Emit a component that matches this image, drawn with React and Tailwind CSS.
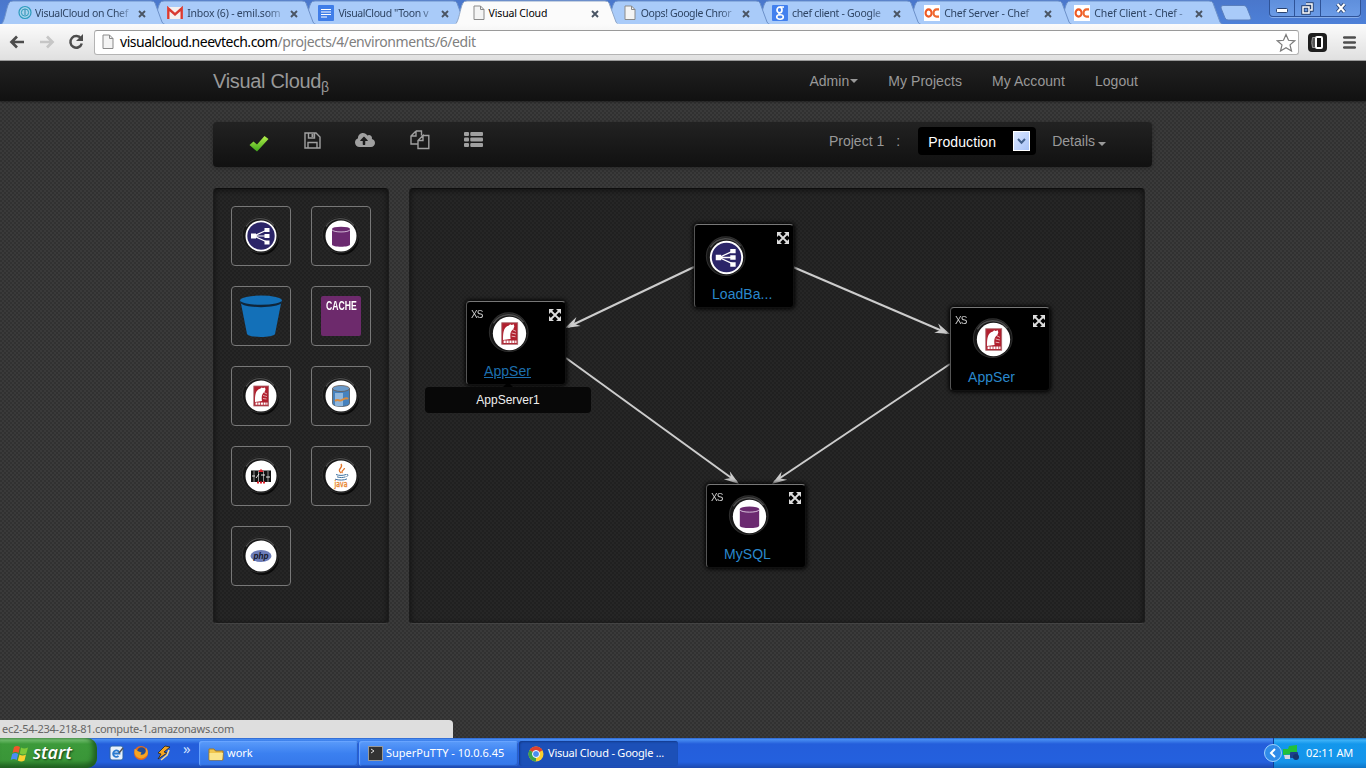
import React from 'react';
import { FaCloudUploadAlt } from 'react-icons/fa';

const TEX = "bg-[conic-gradient(#3a3a3a_25%,#313131_0_50%,#3a3a3a_0_75%,#313131_0)] bg-[length:4px_4px]";

/* ---------- browser chrome icons ---------- */
const PageIcon = ({ className = 'w-3 h-4' }) => (
  <svg viewBox="0 0 12 16" className={className}>
    <path d="M1 1h6.5L11 4.5V14.5H1z" fill="#f4f4f4" stroke="#8a8a8a" />
    <path d="M7.5 1v3.5H11" fill="none" stroke="#8a8a8a" />
  </svg>
);
const VcIcon = () => (
  <svg viewBox="0 0 16 16" className="w-4 h-4">
    <circle cx="8" cy="7.5" r="6" fill="#a9d3ec" stroke="#2d9bbd" strokeWidth="1.2" />
    <circle cx="8" cy="7.5" r="3.6" fill="none" stroke="#2d9bbd" />
    <path d="M8 4v6" stroke="#2d8ab0" />
  </svg>
);
const GmailIcon = () => (
  <svg viewBox="0 0 16 16" className="w-4 h-4">
    <path d="M0 2h16v12H0z" fill="#f5f0f0" />
    <path d="M1.3 14V3.5L8 9.5l6.700-6V14" fill="none" stroke="#d93a32" strokeWidth="2.4" />
  </svg>
);
const DocsIcon = () => (
  <svg viewBox="0 0 16 16" className="w-4 h-4">
    <rect width="16" height="16" rx="1" fill="#3f7de8" />
    <path d="M3 4.500h10M3 7h10M3 9.500h10M3 12h6" stroke="#fff" strokeWidth="1.2" />
  </svg>
);
const GoogleIcon = () => (
  <svg viewBox="0 0 16 16" className="w-4 h-4">
    <rect width="16" height="16" rx="1" fill="#4380ee" />
    <ellipse cx="7.500" cy="5" rx="2.500" ry="2.800" fill="none" stroke="#fff" strokeWidth="1.700" />
    <path d="M8 2h4M7.500 7.800q-1.500 1.200.500 2" fill="none" stroke="#fff" strokeWidth="1.300" />
    <ellipse cx="8" cy="12" rx="3.300" ry="2.200" fill="none" stroke="#fff" strokeWidth="1.600" />
  </svg>
);
const ChefIcon = () => (
  <svg viewBox="0 0 16 16" className="w-4 h-4">
    <rect width="16" height="16" fill="#fff" />
    <ellipse cx="4.600" cy="8" rx="3" ry="3.600" fill="none" stroke="#ee5a24" strokeWidth="2.100" />
    <path d="M15 4.400H12.500a3 3.600 0 0 0 0 7.200H15" fill="none" stroke="#f06a30" strokeWidth="2.100" />
  </svg>
);

const TABS = [
  { icon: <VcIcon />, text: 'VisualCloud on Chef', z: 'z-[8]', pad: 'pl-[16px]', gap: 'w-[18px]', tw: 'w-[98px]', tr: 'tracking-[-.3px]' },
  { icon: <GmailIcon />, text: 'Inbox (6) - emil.som', z: 'z-[7]', pad: 'pl-[15px]', gap: 'w-[20px]', tw: 'w-[98px]', tr: 'tracking-[-.2px]' },
  { icon: <DocsIcon />, text: 'VisualCloud "Toon v', z: 'z-[6]', pad: 'pl-[15px]', gap: 'w-[20px]', tw: 'w-[98px]', tr: 'tracking-[-.4px]' },
  { icon: <PageIcon />, text: 'Visual Cloud', z: 'z-[9]', pad: 'pl-[18px]', gap: 'w-[16px]', tw: 'w-[97px]', tr: 'tracking-[-.15px]', active: true },
  { icon: <PageIcon />, text: 'Oops! Google Chror', z: 'z-[5]', pad: 'pl-[18px]', gap: 'w-[17px]', tw: 'w-[96px]', tr: 'tracking-[-.4px]' },
  { icon: <GoogleIcon />, text: 'chef client - Google', z: 'z-[4]', pad: 'pl-[15px]', gap: 'w-[20px]', tw: 'w-[96px]', tr: 'tracking-[-.3px]' },
  { icon: <ChefIcon />, text: 'Chef Server - Chef', z: 'z-[3]', pad: 'pl-[16px]', gap: 'w-[20px]', tw: 'w-[95px]', tr: 'tracking-[-.2px]' },
  { icon: <ChefIcon />, text: 'Chef Client - Chef -', z: 'z-[2]', pad: 'pl-[15px]', gap: 'w-[20px]', tw: 'w-[96px]', tr: 'tracking-[-.15px]' },
];

function Tab({ icon, text, z, pad, gap, tw, tr, active }) {
  return (
    <div className={`relative ${z} ${pad} w-[151.2px] shrink-0 h-6 flex items-center`}>
      <svg viewBox="0 0 164 24" className="absolute left-0 top-0 w-[164px] h-6" preserveAspectRatio="none">
        <path d="M0 24.500C4 22 5 8 8 3Q9 1 12 1H150Q153 1 154 3L161 22Q162 24 164 24.500Z" fill={active ? '#fbfbfb' : '#a9cbf9'} stroke={active ? '#8ea6c8' : '#6d91c9'} />
        {active && <path d="M0 24.500H164" stroke="#fbfbfb" strokeWidth="1.500" />}
      </svg>
      <div className={`relative ${gap} shrink-0 flex mt-[2px]`}>{icon}</div>
      <div className={`relative ${tw} ${tr} shrink-0 whitespace-nowrap text-[10.5px] leading-4 mt-[2px] ${active ? 'text-black' : 'text-[#2e4463] [mask-image:linear-gradient(90deg,#000_82%,transparent_102%)]'}`}>{text}</div>
      <svg viewBox="0 0 8 8" className="relative shrink-0 ml-[5px] w-2 h-2 mt-[3px]"><path d="M1 1l6 6M7 1L1 7" stroke="#4a5564" strokeWidth="1.900" /></svg>
    </div>
  );
}

function WindowButtons() {
  return (
    <div className="ml-auto mr-[5px] h-[17px] w-[92px] flex rounded-b-[4px] border border-t-0 border-[#2f5397] bg-gradient-to-b from-[#5f8fdc] to-[#6b9be6] shadow-[0_1px_0_#86adea]">
      <div className="w-[25px] border-r border-[#2f5397] flex items-center justify-center">
        <svg viewBox="0 0 12 5" className="w-3 h-[5px] mt-[4px]"><rect x=".5" y=".5" width="11" height="4" rx="1" fill="#fff" stroke="#29426f" /></svg>
      </div>
      <div className="w-[26px] border-r border-[#2f5397] flex items-center justify-center">
        <svg viewBox="0 0 13 13" className="w-[13px] h-[13px]">
          <path d="M5 2h6v6H9M2 5h6v6H2z" fill="none" stroke="#29426f" strokeWidth="3.400" />
          <path d="M5 2h6v6H9M2 5h6v6H2z" fill="none" stroke="#fff" strokeWidth="1.500" />
        </svg>
      </div>
      <div className="flex-1 flex items-center justify-center">
        <svg viewBox="0 0 12 12" className="w-3 h-3"><path d="M2.500 2l7 8M9.500 2l-7 8" stroke="#29426f" strokeWidth="3.800" /><path d="M2.500 2l7 8M9.500 2l-7 8" stroke="#fff" strokeWidth="2" /></svg>
      </div>
    </div>
  );
}

function BrowserBar() {
  return (
    <div className="font-['Noto_Sans',sans-serif]">
      <div className="h-6 flex bg-gradient-to-b from-[#4a77cb] to-[#4d80d8] pl-px">
        {TABS.map((t) => <Tab key={t.text} {...t} />)}
        <svg viewBox="0 0 32 16" className="w-8 h-4 mt-[5px] ml-[9px]"><path d="M3 .500H24Q26 .500 27 3L31 13Q31.500 15 29 15H8Q6 15 5 13L1 3Q.500 .500 3 .500Z" fill="#a9cbf9" stroke="#5a7fbd" /></svg>
        <WindowButtons />
      </div>
      <div className="h-[37px] relative z-20 bg-gradient-to-b from-[#fbfbfb] to-[#e0e0e0] border-b border-[#9a9a9a] flex items-center pl-[9px]">
        <svg viewBox="0 0 16 14" className="w-4 h-[14px]"><path d="M15 7H3M8 1.500L2.500 7L8 12.500" fill="none" stroke="#4d4d4d" strokeWidth="2.700" /></svg>
        <svg viewBox="0 0 16 14" className="w-4 h-[14px] ml-[14px]"><path d="M1 7h12M8 1.500L13.500 7L8 12.500" fill="none" stroke="#c6c6c6" strokeWidth="2.700" /></svg>
        <svg viewBox="0 0 16 16" className="w-4 h-4 ml-[13px]"><path d="M13 4.600A5.800 5.800 0 1 0 13.800 9.500" fill="none" stroke="#4d4d4d" strokeWidth="2.500" /><path d="M15 0V7H8z" fill="#4d4d4d" /></svg>
        <div className="ml-[10px] w-[1205px] h-[25px] rounded-[3px] border border-[#b4b4b4] border-t-[#9a9a9a] bg-white flex items-center pl-[7px]">
          <PageIcon className="w-3 h-[16px]" />
          <div className="ml-[6px] text-[14px] leading-5 tracking-[-.42px] text-[#808080] whitespace-nowrap"><span className="text-black tracking-[-.48px]">visualcloud.neevtech.com</span>/projects/4/environments/6/edit</div>
          <svg viewBox="0 0 20 19" className="w-5 h-[19px] ml-auto mr-[2px]"><path d="M10 1.500l2.500 5.800 6.200.500-4.700 4.100 1.500 6.100L10 14.700 4.500 18 6 11.900 1.300 7.800l6.200-.500z" fill="#fff" stroke="#7b7b7b" strokeWidth="1.200" /></svg>
        </div>
        <svg viewBox="0 0 19 19" className="w-[19px] h-[19px] ml-[9px]">
          <rect width="19" height="19" rx="4" fill="#1e1e1e" />
          <path d="M7 4.500H4.500Q3 9.500 4.500 14.500H7" fill="#555" stroke="#999" />
          <rect x="8" y="4" width="6" height="11" rx="1" fill="#111" stroke="#fff" strokeWidth="2" />
        </svg>
        <svg viewBox="0 0 13 13" className="w-[13px] h-[13px] ml-[16px]"><path d="M1.200 1.500H11.800M1.200 6.500H11.800M1.200 11.500H11.800" stroke="#4d4d4d" strokeWidth="2.600" strokeLinecap="round" /></svg>
      </div>
    </div>
  );
}

/* ---------- service glyphs, drawn in a 40x40 box ---------- */
const Lb = () => (
  <g>
    <circle cx="20" cy="20" r="13.700" fill="#2b2568" />
    <path d="M13 20L26 14M13 20H26M13 20L26 26" stroke="#fff" strokeWidth="1.200" />
    <path d="M10 17.500h5v5h-5zM23.500 12h5v4h-5zM23.500 18h5v4h-5zM23.500 24.500h5v4h-5z" fill="#fff" />
  </g>
);
const Db = () => (
  <g>
    <path d="M11 13V28.500c0 3 18 3 18 0V13z" fill="#6b2a70" />
    <ellipse cx="20" cy="13" rx="9" ry="2.300" fill="#6b2a70" />
    <path d="M11 13.700c1 3 17 3 18 0" fill="none" stroke="#d9c4dc" strokeWidth=".9" />
  </g>
);
const Rails = () => (
  <g>
    <rect x="12.800" y="10" width="14.800" height="20" fill="#b01f2e" stroke="#a9686e" strokeWidth=".8" />
    <path d="M14 26c0-6 0-12 5.500-13.500l1-1 1.500.500 2-.500.500 2-1 2.500c-3 2-3 5-2.500 9z" fill="#fff" />
    <path d="M23 16.500l3 1.500M22 19.500l4 1M22 22.500l3.500.500" stroke="#efc7c9" strokeWidth=".8" />
    <path d="M14.500 27.600H26.500" stroke="#fff" strokeWidth="2.400" strokeDasharray="2 .7" />
  </g>
);
const Storage = () => (
  <g>
    <path d="M11.500 12.500V27.500c0 4 17 4 17 0V12.500z" fill="#4682be" stroke="#555" strokeWidth=".8" />
    <path d="M14 17V29.500c3 1 6 1 8 .500V17z" fill="#8fb6dc" />
    <ellipse cx="20" cy="12.500" rx="8.500" ry="3" fill="#6b9bcb" stroke="#6a5a50" strokeWidth=".8" />
    <path d="M14 25c3-3 4 1 7-1s5-2 6-1" fill="none" stroke="#d98b3e" strokeWidth="2" />
  </g>
);
const Haproxy = () => (
  <g>
    <rect x="10" y="14.500" width="20" height="11.500" fill="#111" />
    <path d="M13 15v11M17.500 15v11M22.500 15v11M27 15v11" stroke="#ccc" strokeWidth=".7" />
    <path d="M11 20h3M15 22l3-4M20 19h4M25 21h4" stroke="#fff" strokeWidth=".9" />
    <path d="M18 15.500l2-2 2 2z" fill="#e01f2b" stroke="#e01f2b" />
    <path d="M16 26.500h8" stroke="#e01f2b" strokeWidth="1.800" strokeDasharray="2 1" />
  </g>
);
const Java = () => (
  <g>
    <path d="M20 17c-5-4 3-5 0-9M21.500 17c-2-2 2-3 2-5" fill="none" stroke="#e2762b" strokeWidth="1.300" />
    <path d="M15 18.500c3 1.200 7 1.200 10 0M16 20.800c3 1 6 1 8.500 0M14 23.200c4 1.200 9 1.200 12-.300M25.500 18.500c2-.500 2 1.500 0 2" fill="none" stroke="#3d719f" strokeWidth="1" />
    <text x="20" y="30.500" textAnchor="middle" fontSize="8" fontFamily="DejaVu Sans, sans-serif" fill="#e98a35" stroke="#e98a35" strokeWidth=".4" textLength="13" lengthAdjust="spacingAndGlyphs">java</text>
  </g>
);
const Php = () => (
  <g>
    <ellipse cx="20" cy="20" rx="10.500" ry="6" fill="#6c7cb8" />
    <text x="20" y="22.500" textAnchor="middle" fontSize="8.500" fontWeight="bold" fontStyle="italic" fontFamily="Liberation Sans, sans-serif" fill="#16182a" textLength="15" lengthAdjust="spacingAndGlyphs">php</text>
  </g>
);

const Disc = ({ children, className = 'w-10 h-10' }) => (
  <svg viewBox="0 0 40 40" className={`${className} overflow-visible`}>
    <circle cx="21" cy="22" r="17" fill="#000" opacity=".7" />
    <circle cx="19.300" cy="18.800" r="18" fill="#161616" stroke="#2e2e2e" strokeWidth="1" />
    <path d="M5 10.500A17 17 0 0 1 33 9.500" stroke="#4c4c4c" strokeWidth="1.400" fill="none" />
    <circle cx="20" cy="20" r="15.500" fill="#fff" />
    {children}
  </svg>
);

const Bucket = () => (
  <svg viewBox="0 0 44 44" className="w-11 h-11">
    <path d="M1.500 7L8 40c2 4 26 4 28 0L42.500 7z" fill="#1370b8" />
    <path d="M1.500 6v3c4 5.500 37 5.500 41 0V6z" fill="#10263a" />
    <ellipse cx="22" cy="6.200" rx="20.800" ry="4.600" fill="#1370b8" />
  </svg>
);
const Cache = () => (
  <div className="w-10 h-10 rounded-[2px] bg-[#6d2a6c] flex justify-center">
    <span className="text-white font-['Liberation_Sans',sans-serif] font-bold text-[12px] leading-[20px] scale-x-[.72]">CACHE</span>
  </div>
);

const PALETTE = [
  <Disc><Lb /></Disc>, <Disc><Db /></Disc>,
  <Bucket />, <Cache />,
  <Disc><Rails /></Disc>, <Disc><Storage /></Disc>,
  <Disc><Haproxy /></Disc>, <Disc><Java /></Disc>,
  <Disc><Php /></Disc>,
];

const Caret = ({ className = '' }) => <span className={`inline-block border-x-4 border-t-4 border-x-transparent border-t-[#999] ${className}`} />;

function Navbar() {
  return (
    <nav className="h-10 bg-gradient-to-b from-[#222] to-[#111] shadow-[0_1px_2px_rgba(0,0,0,.4)] pl-[213px] pr-[228px] flex items-center text-[#999]">
      <div className="text-[20px] leading-6 tracking-[-.32px] whitespace-nowrap">Visual Cloud<sub className="text-[14px] leading-none bottom-[-4px]">β</sub></div>
      <div className="ml-auto flex items-center text-[14px] leading-5 tracking-[.05px] whitespace-nowrap">
        <span className="flex items-center">Admin<Caret className="ml-px" /></span>
        <span className="ml-[30px]">My Projects</span>
        <span className="ml-[30px]">My Account</span>
        <span className="ml-[30px]">Logout</span>
      </div>
    </nav>
  );
}

function Toolbar() {
  return (
    <div className="h-[45px] w-[939px] rounded-[4px] bg-gradient-to-b from-[#222] to-[#111] shadow-[0_1px_4px_rgba(0,0,0,.3)] flex items-start text-[#999] text-[14px] leading-5">
      <svg viewBox="0 0 20 19" className="w-5 h-[19px] ml-[36px] mt-[12px]">
        <defs><linearGradient id="ck" x1="0" y1="0" x2="0" y2="1"><stop offset="0" stopColor="#b4f04a" /><stop offset="1" stopColor="#3fa51c" /></linearGradient></defs>
        <path d="M.500 11L4.500 7.500L8 10.500L15.500 2L19.500 5L8 17.500Z" fill="url(#ck)" />
      </svg>
      <svg viewBox="0 0 17 17" className="w-[17px] h-[17px] ml-[35px] mt-[10px]" fill="none" stroke="#a0a0a0" strokeWidth="1.400">
        <path d="M1 1H12L16 5V16H1zM4 16V10.500H13V16M4.500 1V6H10.500V1" /><path d="M8.500 2v3" strokeWidth="2" />
      </svg>
      <FaCloudUploadAlt className="w-5 h-5 ml-[34px] mt-[8px] text-[#a0a0a0]" />
      <svg viewBox="0 0 20 20" className="w-5 h-5 ml-[35px] mt-[8px]" fill="none" stroke="#a0a0a0" strokeWidth="1.400">
        <path d="M6 1H11.500V5.500M6 1L1 6V14H7.500M6 1V6H1M13 5.500H18.800V18.500H8V10.500L13 5.500V10.500H8" />
      </svg>
      <svg viewBox="0 0 19 15" className="w-[19px] h-[15px] ml-[34px] mt-[10px]" fill="#a0a0a0">
        <rect width="5" height="4" rx="1" /><rect x="6.300" width="12.700" height="4" rx="1" />
        <rect y="5.500" width="5" height="4" rx="1" /><rect x="6.300" y="5.500" width="12.700" height="4" rx="1" />
        <rect y="11" width="5" height="4" rx="1" /><rect x="6.300" y="11" width="12.700" height="4" rx="1" />
      </svg>
      <span className="ml-auto mt-[9px]">Project 1</span>
      <span className="ml-[12px] mt-[9px] w-1">:</span>
      <div className="ml-[18px] mt-[5px] w-[118px] h-7 rounded-[4px] bg-black text-white flex items-center pl-[10px] pr-[6px] justify-between">
        <span className="tracking-[.1px] mt-px">Production</span>
        <span className="w-[17px] h-5 border border-white bg-gradient-to-br from-[#dbe7ff] to-[#a9c3f8] flex items-center justify-center">
          <svg viewBox="0 0 9 7" className="w-[9px] h-[7px]"><path d="M1 1l3.500 3.700L8 1" fill="none" stroke="#42608c" strokeWidth="2" /></svg>
        </span>
      </div>
      <span className="ml-[16px] mt-[9px] mr-[46px] flex items-center">Details<Caret className="ml-[3px] mt-[5px]" /></span>
    </div>
  );
}

const PANEL = 'h-[436px] rounded-[4px] bg-black/[.34] border border-t-black/60 border-x-black/20 border-b-white/15 shadow-[inset_0_1px_6px_rgba(0,0,0,.6)]';

const Expand = () => (
  <svg viewBox="0 0 12 12" className="absolute right-[4px] top-[7px] w-3 h-3" fill="#ddd">
    <path d="M0 0h5L0 5zM12 0v5L7 0zM0 12V7l5 5zM12 12H7l5-5z" />
    <path d="M1.500 1.500l9 9M10.500 1.500l-9 9" stroke="#ddd" strokeWidth="1.800" />
  </svg>
);

function Node({ pos, xs, iconPos, labelPos, label, hover, children }) {
  return (
    <div className={`absolute ${pos} w-[100px] h-[84px] rounded-[4px] bg-black border border-t-[#777] border-l-[#555] border-r-[#111] border-b-[#111] shadow-[0_0_4px_1px_#000]`}>
      {xs && <span className="absolute left-[4px] top-[7px] text-[10px] leading-3 tracking-[-.9px] scale-y-[1.05] text-[#ccc]">XS</span>}
      <div className={`absolute ${iconPos}`}><Disc className="w-[43px] h-[43px]">{children}</Disc></div>
      <Expand />
      <span className={`absolute ${labelPos} top-[59px] text-[14px] leading-5 tracking-[.05px] whitespace-nowrap ${hover ? 'text-[#1d6fae] underline' : 'text-[#2a88cc]'}`}>{label}</span>
    </div>
  );
}

const LINKS = [
  { d: 'M285 79L159 139', tip: 'translate(156 140) rotate(154.500)' },
  { d: 'M384 79L538 145', tip: 'translate(541 146) rotate(23)' },
  { d: 'M157 170L328 294', tip: 'translate(330 296) rotate(36)' },
  { d: 'M541 176L365 294', tip: 'translate(363 296) rotate(146)' },
];

function Canvas() {
  return (
    <div className={`${PANEL} relative w-[736px]`}>
      <svg viewBox="0 0 734 434" className="absolute left-[-1px] top-[-1px] w-[734px] h-[434px]">
        {LINKS.map((l) => (
          <g key={l.d}>
            <path d={l.d} stroke="#ccc" strokeWidth="2" />
            <path d="M0 0L-15 -5L-10 0L-15 5Z" fill="#ccc" transform={l.tip} />
          </g>
        ))}
      </svg>
      <Node pos="left-[284px] top-[35px]" iconPos="left-[10px] top-[11px]" labelPos="left-[17px]" label="LoadBa..."><Lb /></Node>
      <Node pos="left-[56px] top-[112px]" xs iconPos="left-[21px] top-[10px]" labelPos="left-[17px]" label="AppSer" hover><Rails /></Node>
      <Node pos="left-[540px] top-[118px]" xs iconPos="left-[21px] top-[10px]" labelPos="left-[17px]" label="AppSer"><Rails /></Node>
      <Node pos="left-[296px] top-[295px]" xs iconPos="left-[21px] top-[10px]" labelPos="left-[17px]" label="MySQL"><Db /></Node>
      <div className="absolute left-[15px] top-[198px] w-[166px] h-[26px] rounded-[4px] bg-[#080808] text-[#eee] text-[12px] leading-[26px] text-center">
        AppServer1
        <span className="absolute left-[78px] top-[-5px] border-x-[5px] border-b-[5px] border-x-transparent border-b-black" />
      </div>
    </div>
  );
}

/* ---------- desktop taskbar ---------- */
function TaskButton({ icon, label, className }) {
  return (
    <div className={`h-[25px] rounded-[3px] flex items-center pl-[9px] gap-[3px] whitespace-nowrap text-white text-[11px] ${className}`}>{icon}<span>{label}</span></div>
  );
}
const UP = 'bg-gradient-to-b from-[#5a9bfa] via-[#3b80f0] to-[#3577ea] shadow-[inset_1px_1px_1px_#6aa6ff,inset_-1px_-1px_1px_#2a5cc4]';

function Taskbar() {
  return (
    <div className="h-[30px] flex font-['Noto_Sans',sans-serif] bg-[linear-gradient(#1f4fb8_0,#4a90f5_1px,#3c7eea_3px,#245edb_6px,#2460de_24px,#1c48ae_30px)]">
      <div className="w-[97px] rounded-r-[10px] bg-[linear-gradient(#5aa05a_0,#6dbb6a_2px,#3c9a3a_6px,#3a9638_22px,#236b24_30px)] shadow-[inset_-4px_-2px_5px_#1f5f20] flex items-center pl-[10px]">
        <svg viewBox="0 0 20 19" className="w-5 h-[19px]">
          <path d="M4 3q3-2 6 0l-1.500 6q-3-2-6 0z" fill="#f0562b" /><path d="M11 3.500q3 2 7 0l-1.700 6q-3 2-6.500 0z" fill="#7fca3a" />
          <path d="M2.200 10q3-2 6 0L6.700 16q-3-2-6 0z" fill="#4a8df5" /><path d="M9.500 10.500q3 2 6.500 0l-1.500 6q-3 2-6.700 0z" fill="#fbd130" />
        </svg>
        <span className="ml-[3px] mb-[2px] text-white font-['Open_Sans',sans-serif] font-semibold italic text-[18px] leading-5 [text-shadow:1px_1px_2px_#143d14] tracking-[-.1px]">start</span>
      </div>
      <div className="w-[102px] flex items-center pl-[12px]">
        <svg viewBox="0 0 16 16" className="w-4 h-4"><rect x="1" y="1" width="13" height="14" rx="2" fill="#e8f1fb" stroke="#2b63a8" /><path d="M4.500 8.500h6A3.200 3.200 0 1 0 9.500 11" fill="none" stroke="#2a7bd0" strokeWidth="1.800" /><path d="M10 8l4-5" stroke="#555" strokeWidth="1.500" /></svg>
        <svg viewBox="0 0 16 16" className="w-4 h-4 ml-[8px]"><circle cx="8" cy="8" r="7" fill="#e66a1b" /><circle cx="8.500" cy="6.500" r="4.300" fill="#234f96" /><path d="M1.500 4q2 0 3 2l4 1.500-1 2q3 1 5-2 1-3 .500-5 3 4 1 8-5 5-10 1.500Q1 10 1.500 4z" fill="#f6a523" /></svg>
        <svg viewBox="0 0 16 16" className="w-4 h-4 ml-[7px]"><path d="M9 1L2 8l3 1-3 5 9-6-3-1 6-5z" fill="#f5a623" stroke="#222" strokeWidth=".8" /><path d="M13 5l-2 5-6 5" stroke="#f5d890" strokeWidth="1.600" fill="none" /></svg>
        <span className="ml-[11px] mb-[10px] text-[15px] leading-4 text-[#cfe0ff]">»</span>
      </div>
      <div className="flex gap-[1px] pt-[3px]">
        <TaskButton className={`w-[159px] ${UP}`} label="work" icon={
          <svg viewBox="0 0 16 14" className="w-4 h-[14px]"><path d="M1 2h5l1.500 2H15v9H1z" fill="#f0c64e" stroke="#a97a1f" /><path d="M1.500 6H15l-1 7H1.500z" fill="#fbe58c" /></svg>} />
        <TaskButton className={`w-[159px] ${UP}`} label="SuperPuTTY - 10.0.6.45" icon={
          <svg viewBox="0 0 15 15" className="w-[15px] h-[15px]"><rect x=".5" y=".5" width="14" height="14" fill="#333" stroke="#999" /><path d="M3 3l3 2-3 2" fill="none" stroke="#ddd" /></svg>} />
        <TaskButton className="w-[159px] bg-[#1c50b8] shadow-[inset_1px_1px_2px_#123a8c] tracking-[-.22px]" label="Visual Cloud - Google ..." icon={
          <svg viewBox="0 0 16 16" className="w-4 h-4 mr-px"><circle cx="8" cy="8" r="7.500" fill="#fbd02f" /><path d="M8 8L1.500 4.300A7.500 7.500 0 0 1 14.500 4.300z" fill="#e0402f" /><path d="M8 8L8 15.500A7.500 7.500 0 0 1 1.500 4.300z" fill="#3ba24c" /><circle cx="8" cy="8" r="3.500" fill="#4a8df0" stroke="#fff" /></svg>} />
      </div>
      <div className="ml-auto w-[93px] border-l border-[#0f3f96] bg-[linear-gradient(#1a73c8_0,#3fb3f8_2px,#1397ec_6px,#1594ea_24px,#0f74c6_30px)] flex items-center text-white text-[11px] whitespace-nowrap">
        <svg viewBox="0 0 18 18" className="shrink-0 w-[18px] h-[18px] -ml-[10px]"><circle cx="9" cy="9" r="8.500" fill="#2f8be8" stroke="#9fd0fb" /><path d="M11 5L7 9l4 4" fill="none" stroke="#fff" strokeWidth="2" /></svg>
        <svg viewBox="0 0 18 18" className="shrink-0 w-[18px] h-[18px]"><path d="M7 2l8-1v7l-5 2-9 1V5h5z" fill="#22c03a" /><rect x="8" y="8" width="8" height="6" rx="1" fill="#1c3f8d" /><path d="M2 11h6v4H3z" fill="#d7d7e4" /><circle cx="14" cy="13" r="3" fill="#16356f" /></svg>
        <span className="ml-[6px] mt-[1px] tracking-[-.1px]">02:11 AM</span>
      </div>
    </div>
  );
}

export default function App() {
  return (
    <div className={`w-[1366px] h-[768px] overflow-hidden flex flex-col font-['Liberation_Sans',sans-serif] ${TEX}`}>
      <BrowserBar />
      <Navbar />
      <main className="pl-[213px] pt-[21px] flex-1">
        <Toolbar />
        <div className="flex gap-5 mt-[21px]">
          <div className={`${PANEL} w-[176px] p-[17px]`}>
            <div className="grid grid-cols-[60px_60px] gap-5">
              {PALETTE.map((icon, i) => (
                <div key={i} className="w-[60px] h-[60px] rounded-[4px] border border-[#777] flex items-center justify-center">{icon}</div>
              ))}
            </div>
          </div>
          <Canvas />
        </div>
      </main>
      <div className="w-[453px] h-[18px] rounded-tr-[4px] bg-[#dedede] text-[#666] font-['Noto_Sans',sans-serif] text-[11px] leading-[18px] tracking-[-.27px] pl-[2px]">ec2-54-234-218-81.compute-1.amazonaws.com</div>
      <Taskbar />
    </div>
  );
}
